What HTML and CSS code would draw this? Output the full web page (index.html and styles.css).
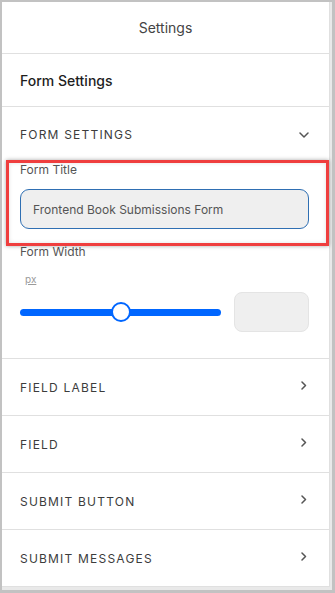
FILE: index.html
```html
<!DOCTYPE html>
<html lang="en">
<head>
    <meta charset="UTF-8">
    <meta name="viewport" content="width=device-width, initial-scale=1.0">
    <title>Settings</title>
    <link rel="stylesheet" href="styles.css">
</head>
<body>
    <div class="frame">
        <div class="panel">
            <div class="panel-header">Settings</div>
            <div class="panel-title">Form Settings</div>

            <!-- open section -->
            <div class="section">
                <div class="section-head">
                    <span>FORM SETTINGS</span>
                    <svg class="chev-down" width="10" height="6" viewBox="0 0 10 6"><path d="M1 1l4 4 4-4" fill="none" stroke="#555" stroke-width="1.5" stroke-linecap="round" stroke-linejoin="round"/></svg>
                </div>
                <div class="field-label">Form Title</div>
                <div class="text-input">Frontend Book Submissions Form</div>
                <div class="field-label width-label">Form Width</div>
                <div class="unit">px</div>
                <div class="slider-row">
                    <div class="slider">
                        <div class="track"></div>
                        <div class="thumb"></div>
                    </div>
                    <div class="number-box"></div>
                </div>
                <div class="highlight"></div>
            </div>

            <!-- collapsed sections -->
            <div class="row"><span>FIELD LABEL</span><svg class="chev" width="6" height="9" viewBox="0 0 6 9"><path d="M1 1l3.5 3.5L1 8" fill="none" stroke="#555" stroke-width="1.5" stroke-linecap="round" stroke-linejoin="round"/></svg></div>
            <div class="row"><span>FIELD</span><svg class="chev" width="6" height="9" viewBox="0 0 6 9"><path d="M1 1l3.5 3.5L1 8" fill="none" stroke="#555" stroke-width="1.5" stroke-linecap="round" stroke-linejoin="round"/></svg></div>
            <div class="row"><span>SUBMIT BUTTON</span><svg class="chev" width="6" height="9" viewBox="0 0 6 9"><path d="M1 1l3.5 3.5L1 8" fill="none" stroke="#555" stroke-width="1.5" stroke-linecap="round" stroke-linejoin="round"/></svg></div>
            <div class="row"><span>SUBMIT MESSAGES</span><svg class="chev" width="6" height="9" viewBox="0 0 6 9"><path d="M1 1l3.5 3.5L1 8" fill="none" stroke="#555" stroke-width="1.5" stroke-linecap="round" stroke-linejoin="round"/></svg></div>
        </div>
    </div>
</body>
</html>
```

FILE: styles.css
```css
* {
    box-sizing: border-box;
}
html, body {
    margin: 0;
    padding: 0;
}
body {
    font-family: 'Inter', 'Roboto', sans-serif;
    background: #c2c2c2;
    width: 335px;
    height: 593px;
    overflow: hidden;
    padding: 2px 3px 3px 2px;
}
.frame {
    background: #e9e9e9;
    height: 588px;
    overflow: hidden;
}
.panel {
    width: 328px;
    background: #fff;
    border-right: 1px solid #e0e0e0;
}
.panel-header {
    height: 52px;
    border-bottom: 1px solid #e0e0e0;
    display: flex;
    align-items: center;
    justify-content: center;
    font-size: 14px;
    color: #444;
}
.panel-title {
    height: 53px;
    border-bottom: 1px solid #e0e0e0;
    display: flex;
    align-items: center;
    padding-left: 18px;
    font-size: 14px;
    font-weight: 500;
    color: #1e1e1e;
}
.section {
    position: relative;
    padding: 0 20px 26px 18px;
    border-bottom: 1px solid #e0e0e0;
}
.section-head {
    height: 55px;
    display: flex;
    align-items: center;
    justify-content: space-between;
    font-size: 12px;
    letter-spacing: 1.2px;
    color: #3c3c3c;
}
.field-label {
    font-size: 12px;
    line-height: 16px;
    color: #555;
}
.text-input {
    margin-top: 11px;
    height: 40px;
    border: 1px solid #2f6fb3;
    border-radius: 9px;
    background: #efefef;
    display: flex;
    align-items: center;
    padding-left: 12px;
    font-size: 12px;
    color: #555;
}
.width-label {
    margin-top: 15px;
}
.unit {
    margin-top: 12px;
    margin-left: 5px;
    font-size: 10px;
    line-height: 14px;
    color: #9a9a9a;
    text-decoration: underline;
}
.slider-row {
    margin-top: 6px;
    display: flex;
    align-items: center;
    gap: 13px;
}
.slider {
    position: relative;
    width: 201px;
    height: 40px;
    display: flex;
    align-items: center;
}
.track {
    width: 100%;
    height: 7px;
    border-radius: 4px;
    background: #0066ff;
}
.thumb {
    position: absolute;
    left: 91px;
    top: 10px;
    width: 20px;
    height: 20px;
    border-radius: 50%;
    background: #fff;
    border: 2px solid #0066ff;
}
.number-box {
    width: 75px;
    height: 40px;
    border-radius: 8px;
    background: #efefef;
    border: 1px solid #e4e4e4;
}
.highlight {
    position: absolute;
    left: 4px;
    top: 53px;
    width: 323px;
    height: 86px;
    border: 3px solid #ef3e3e;
    box-shadow: 0 0 4px rgba(0, 0, 0, 0.35), inset 0 0 4px rgba(0, 0, 0, 0.12);
}
.row {
    height: 57px;
    border-bottom: 1px solid #e0e0e0;
    display: flex;
    align-items: center;
    justify-content: space-between;
    padding: 0 22px 0 18px;
    font-size: 12px;
    letter-spacing: 1.2px;
    color: #3c3c3c;
}
.row .chev {
    margin-top: -4px;
}
```
